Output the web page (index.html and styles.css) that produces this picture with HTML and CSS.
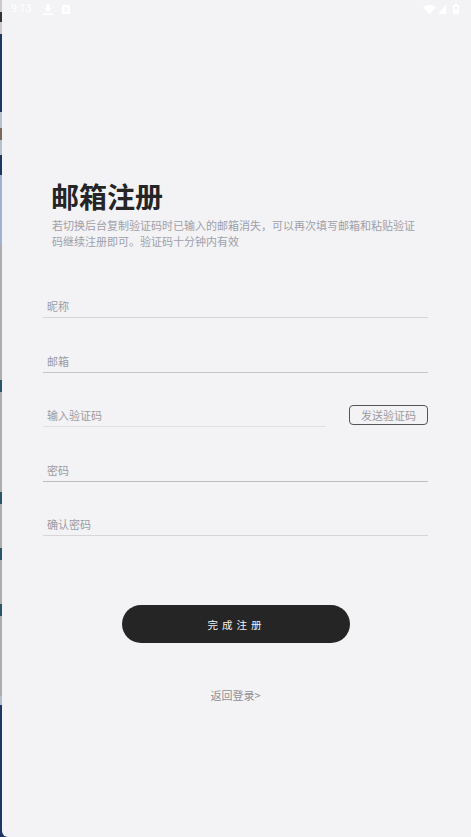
FILE: index.html
```html
<!DOCTYPE html>
<html lang="zh-CN">
<head>
<meta charset="utf-8">
<title>邮箱注册</title>
<link rel="stylesheet" href="styles.css">
</head>
<body>
<div class="edge-strip"></div>
<main class="screen">
  <header class="status-bar">
    <div class="status-left">
      <span class="clock">9:13</span>
      <svg class="icon-download" width="10" height="11" viewBox="0 0 10 11"><path d="M3.500 0h3v4h2.500L5 8 1 4h2.500zM0 9.500h10V11H0z" fill="#fff"/></svg>
      <svg class="icon-a" width="8" height="9" viewBox="0 0 8 9"><path fill-rule="evenodd" d="M0 0h8v9H0zM3.300 2 2 7h1l.3-1h1.400l.3 1h1L4.700 2zM3.500 5 4 3.200 4.500 5z" fill="#fff"/></svg>
    </div>
    <div class="status-right">
      <svg width="13" height="9" viewBox="0 0 15 10" preserveAspectRatio="none"><path d="M0 2.500C4-.8 11-.8 15 2.500L7.500 10z" fill="#fff"/></svg>
      <svg width="9" height="9" viewBox="0 0 10 10" preserveAspectRatio="none"><path d="M9 0v10H0zM9.500 7h.5v3h-.5z" fill="#fff"/></svg>
      <svg class="icon-battery" width="6" height="10" viewBox="0 0 6 10"><path fill-rule="evenodd" d="M2 0h2v1h2v9H0V1h2zM1.500 2.500v3h3v-3z" fill="#fff"/></svg>
    </div>
  </header>

  <section class="intro">
    <h1 class="title">邮箱注册</h1>
    <p class="desc">若切换后台复制验证码时已输入的邮箱消失，可以再次填写邮箱和粘贴验证码继续注册即可。验证码十分钟内有效</p>
  </section>

  <form class="form">
    <div class="field"><span class="label">昵称</span></div>
    <div class="field"><span class="label">邮箱</span></div>
    <div class="code-row">
      <div class="field code-field"><span class="label">输入验证码</span></div>
      <button type="button" class="send-btn">发送验证码</button>
    </div>
    <div class="field"><span class="label">密码</span></div>
    <div class="field"><span class="label">确认密码</span></div>
  </form>

  <div class="actions">
    <button type="button" class="submit-btn">完成注册</button>
    <a class="back-link">返回登录&gt;</a>
  </div>
</main>
</body>
</html>
```
FILE: styles.css
```css
* { box-sizing: border-box; }
html, body { margin: 0; padding: 0; }
body {
  width: 471px;
  height: 837px;
  overflow: hidden;
  background: #1f3564;
  font-family: "Noto Sans CJK SC", "Liberation Sans", sans-serif;
}
.edge-strip {
  position: absolute;
  left: 0;
  top: 0;
  width: 2px;
  height: 837px;
  background: linear-gradient(to bottom,
    #cfc8c8 0 12px, #333 12px 22px, #cfc8c8 22px 34px, #1f3564 34px 112px,
    #b5c2cc 112px 128px, #7a6a5a 128px 140px, #b5c2cc 140px 155px, #1f3564 155px 175px,
    #9fb3d0 175px 245px, #adadad 245px 380px, #2b5566 380px 392px, #adadad 392px 492px,
    #2b5566 492px 504px, #adadad 504px 548px, #2b5566 548px 560px, #adadad 560px 604px,
    #2b5566 604px 616px, #adadad 616px 696px, #b5bccb 696px 705px, #1f3564 705px);
}
.screen {
  width: 469px;
  height: 837px;
  margin-left: 2px;
  background: #f3f3f5;
  border-bottom-left-radius: 6px;
  display: flex;
  flex-direction: column;
}
.status-bar {
  height: 20px;
  padding: 0 12px 2px 9px;
  display: flex;
  align-items: center;
  justify-content: space-between;
}
.status-left { display: flex; align-items: center; }
.clock {
  color: #fff;
  font: 10.500px/1 "Roboto", sans-serif;
  width: 32px;
}
.icon-a { margin-left: 9px; }
.status-right { display: flex; align-items: center; gap: 2px; }
.icon-battery { margin-left: 4px; }
.intro { padding: 157px 50px 0 49px; }
.title {
  margin: 0;
  font-size: 28px;
  line-height: 38px;
  font-weight: 700;
  color: #252525;
}
.desc {
  margin: 2px 0 0 1px;
  width: 365px;
  font-size: 11px;
  line-height: 16px;
  color: #a0a0aa;
}
.form {
  margin-top: 49px;
  padding: 0 43px 0 41px;
  display: flex;
  flex-direction: column;
  gap: 34.500px;
}
.field {
  height: 20px;
  border-bottom: 1.500px solid #d6d6d8;
  padding-left: 4px;
}
.form > .field:nth-child(2) { border-bottom: 1px solid #c6c6c8; }
.form > .field:nth-child(4) { border-bottom: 1px solid #bdbdc0; }
.label {
  display: block;
  font-size: 11px;
  line-height: 16px;
  color: #9b9ba3;
}
.code-row {
  display: flex;
  justify-content: space-between;
  align-items: flex-start;
}
.code-field { width: 283px; border-bottom-color: #e0e0e2; }
.send-btn {
  width: 79px;
  height: 20px;
  padding: 0;
  margin-top: -2px;
  border: 1px solid #555;
  border-radius: 4px;
  background: transparent;
  font-family: inherit;
  font-size: 11px;
  line-height: 18px;
  color: #9b9ba3;
}
.actions {
  margin-top: 69px;
  padding-right: 2px;
  display: flex;
  flex-direction: column;
  align-items: center;
}
.submit-btn {
  width: 228px;
  height: 38px;
  padding: 0 0 0 2px;
  border: 0;
  border-radius: 19px;
  background: #252525;
  color: #f3f3f5;
  font-family: inherit;
  font-size: 10.500px;
  letter-spacing: 4px;
}
.back-link {
  margin-top: 44px;
  font-size: 11px;
  line-height: 16px;
  color: #8f8f95;
}
```
